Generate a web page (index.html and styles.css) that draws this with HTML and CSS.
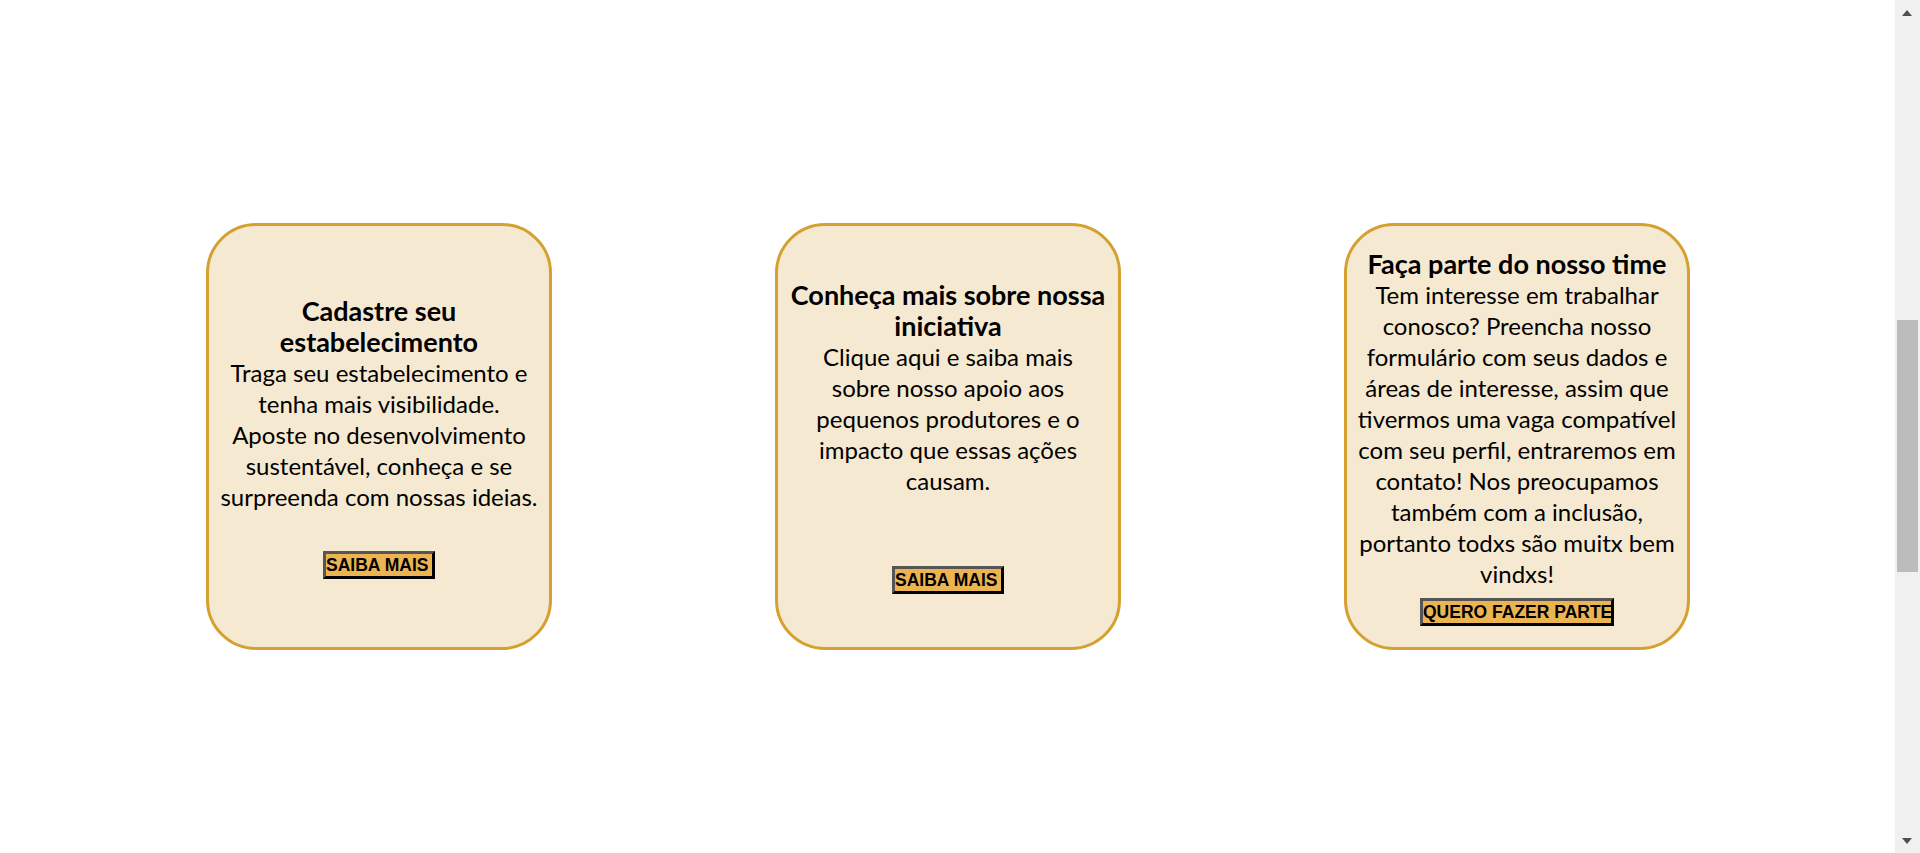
FILE: index.html
```html
<!DOCTYPE html>
<html lang="pt-BR">
<head>
<meta charset="utf-8">
<title>Cards</title>
<link rel="stylesheet" href="styles.css">
</head>
<body>
<div class="spacer-top"></div>
<section class="cards">
  <article class="card">
    <h2 class="card-title">Cadastre seu estabelecimento</h2>
    <p class="card-text">Traga seu estabelecimento e tenha mais visibilidade.<br>Aposte no desenvolvimento sustentável, conheça e se surpreenda com nossas ideias.</p>
    <button class="card-btn btn-short gap-1">SAIBA MAIS</button>
  </article>
  <article class="card">
    <h2 class="card-title">Conheça mais sobre nossa iniciativa</h2>
    <p class="card-text narrow">Clique aqui e saiba mais sobre nosso apoio aos pequenos produtores e o impacto que essas ações causam.</p>
    <button class="card-btn btn-short gap-2">SAIBA MAIS</button>
  </article>
  <article class="card">
    <h2 class="card-title">Faça parte do nosso time</h2>
    <p class="card-text">Tem interesse em trabalhar conosco? Preencha nosso formulário com seus dados e áreas de interesse, assim que tivermos uma vaga compatível com seu perfil, entraremos em contato! Nos preocupamos também com a inclusão, portanto todxs são muitx bem vindxs!</p>
    <button class="card-btn btn-long">QUERO FAZER PARTE</button>
  </article>
</section>
<div class="spacer-bottom"></div>
<div class="scrollbar" aria-hidden="true">
  <span class="sb-arrow sb-up"></span>
  <span class="sb-thumb"></span>
  <span class="sb-arrow sb-down"></span>
</div>
<script src="app.js"></script>
</body>
</html>
```
FILE: styles.css
```css
html, body {
  margin: 0;
  padding: 0;
  background: #ffffff;
}

body {
  font-family: "Lato", "Noto Sans", sans-serif;
  color: #000000;
}

.spacer-top {
  height: 1221px;
}

.spacer-bottom {
  height: 1070px;
}

.cards {
  display: flex;
  gap: 223px;
  padding-left: 206px;
}

.card {
  box-sizing: border-box;
  width: 346px;
  height: 427px;
  border: 3px solid #d4a02f;
  border-radius: 50px;
  background: #f6e9d1;
  display: flex;
  flex-direction: column;
  align-items: center;
  justify-content: center;
  text-align: center;
}

.card-title {
  margin: 0;
  font-size: 27px;
  font-weight: 700;
  line-height: 31px;
}

.card-text {
  margin: 0;
  font-size: 24px;
  font-weight: 400;
  line-height: 31px;
}

.card-text.narrow {
  max-width: 290px;
}

.card-btn {
  box-sizing: border-box;
  height: 28px;
  margin-top: 9px;
  padding: 0;
  font-family: "Liberation Sans", Arial, sans-serif;
  font-size: 17.5px;
  font-weight: 700;
  line-height: 22px;
  color: #000000;
  background: #ebb451;
  border: 3px solid;
  border-color: #555555 #000000 #000000 #555555;
  text-align: left;
  white-space: nowrap;
  overflow: hidden;
}

.btn-short {
  width: 112px;
}

.btn-long {
  width: 194px;
}

.gap-1 {
  margin-top: 39px;
}

.gap-2 {
  margin-top: 70px;
}

/* browser scrollbar as seen in the reference */
.scrollbar {
  position: fixed;
  top: 0;
  right: 0;
  width: 25px;
  height: 100vh;
  background: #f0f0f0;
}

.sb-arrow {
  position: absolute;
  left: 7px;
  width: 0;
  height: 0;
  border-left: 5.5px solid transparent;
  border-right: 5.5px solid transparent;
}

.sb-up {
  top: 10px;
  border-bottom: 6px solid #505050;
}

.sb-down {
  bottom: 9px;
  border-top: 6px solid #505050;
}

.sb-thumb {
  position: absolute;
  top: 320px;
  left: 2px;
  width: 21px;
  height: 252px;
  background: #bcbcbc;
}
```
FILE: app.js
```js
window.scrollTo(0, 998);
```
